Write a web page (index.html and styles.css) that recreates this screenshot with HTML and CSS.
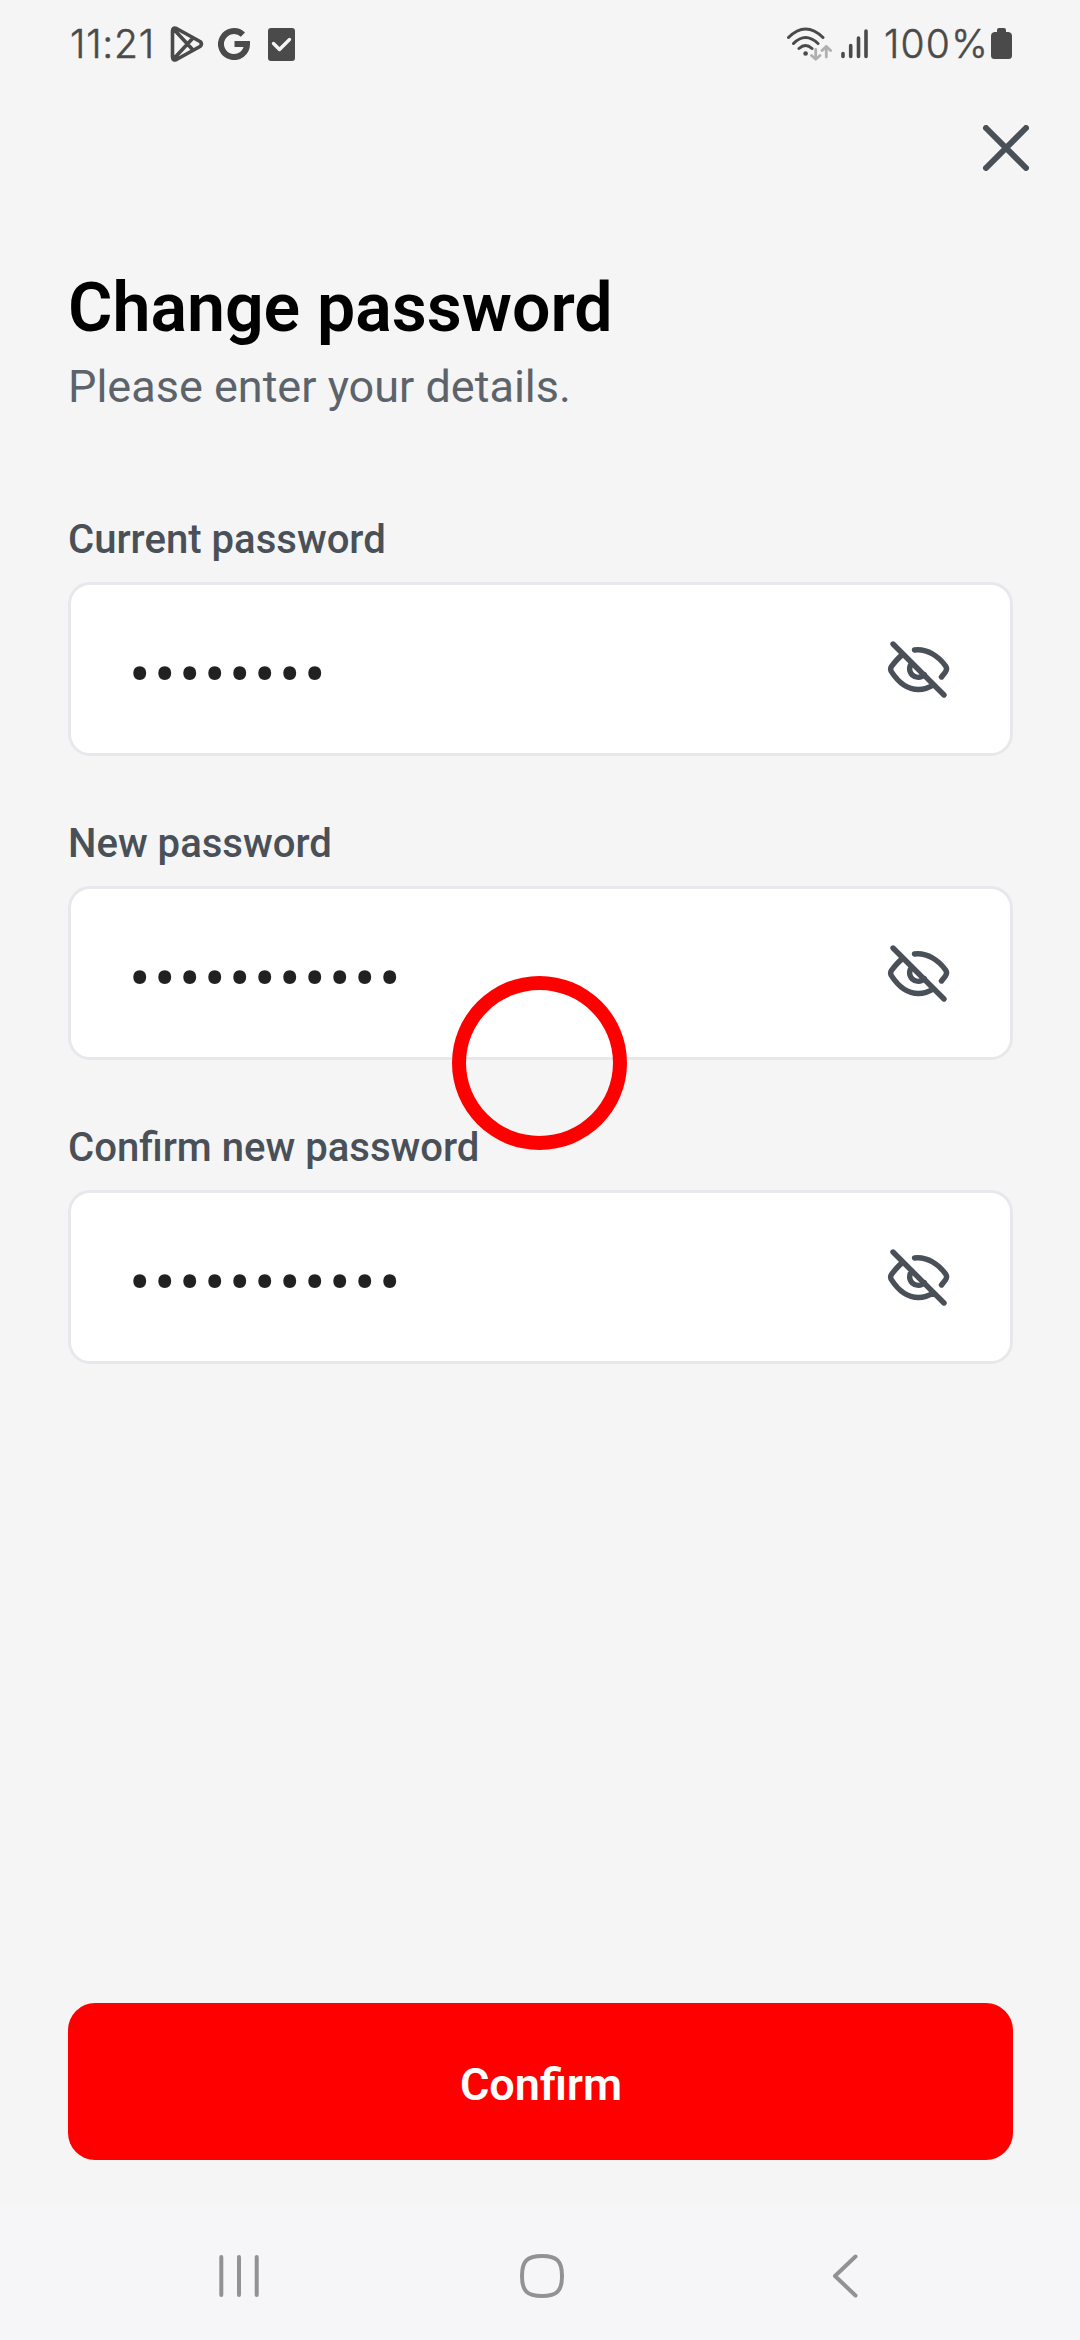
FILE: index.html
```html
<!DOCTYPE html>
<html lang="en">
<head>
<meta charset="utf-8">
<title>Change password</title>
<link rel="stylesheet" href="styles.css">
</head>
<body>
<svg class="defs" aria-hidden="true">
  <symbol id="eye-off" viewBox="0 0 68 68">
    <path d="M30.5 15C44 13.5 55 22 61.5 30.8Q63.600 34 61.500 36.800L57.500 42M18 20C13.500 23.500 10.500 27.500 7.400 31.600Q5.800 34 7.400 36.600C15 48.500 24 54.500 34.500 54.500C40 54.500 44.500 53 49 50M28 27.800A8.500 8.500 0 1 0 40.500 39.700M9 9L60 60"/>
  </symbol>
</svg>
<div class="screen">
  <header class="status">
    <div class="status-left">
      <span class="clock">11:21</span>
      <svg class="i-play" viewBox="0 0 34 36"><path d="M2.500 5V31Q2.800 35 6.500 33.500L30 20.500Q33 18 30 15.500L6.500 2.500Q2.800 1 2.500 5ZM4 3.500L23 24M4 32.500L23 12"/></svg>
      <svg class="i-g" viewBox="0 0 32 32"><path d="M24.900 6.600A13 13 0 1 0 29 16H16.500"/></svg>
      <svg class="i-check" viewBox="0 0 27 33"><rect width="27" height="33" rx="3"/><path d="M5.500 15.500L11.500 21.500L21.500 11.500"/></svg>
    </div>
    <div class="status-right">
      <svg class="i-wifi" viewBox="0 0 46 34"><g class="arcs"><path d="M1.500 10.500Q18.500-6.500 36 10.500M6.500 16.500Q18.500 4.500 31 16.500M12 21.500Q18.500 15.500 25 21.500"/></g><circle cx="18.600" cy="26.500" r="2.300"/><g class="arrows"><path d="M28.700 22.500V32M24.500 28.500L28.700 32.300L33 28.500M39.300 30V19.500M35 23.500L39.300 19.500L43.600 23.500"/></g></svg>
      <svg class="i-signal" viewBox="0 0 28 30"><path d="M2 24.500V27.500M9.700 16.500V27.500M17.500 9V27.500M25 2V27.500"/></svg>
      <span class="battery-text">100%</span>
      <svg class="i-battery" viewBox="0 0 21 32"><path d="M6 4V2Q6 0 8 0H13Q15 0 15 2V4H17.500Q21 4.500 21 8V27.500Q21 31 17.500 31H3.500Q0 31 0 27.500V8Q0 4.500 3.500 4Z"/></svg>
    </div>
  </header>
  <div class="toolbar">
    <svg class="close" viewBox="0 0 46 46"><path d="M3 3L43 43M43 3L3 43"/></svg>
  </div>
  <main class="content">
    <h1>Change password</h1>
    <p class="sub">Please enter your details.</p>
    <div class="field">
      <label>Current password</label>
      <div class="box"><span class="dots">••••••••</span><svg class="eye"><use href="#eye-off"/></svg></div>
    </div>
    <div class="field">
      <label>New password</label>
      <div class="box"><span class="dots">•••••••••••</span><svg class="eye"><use href="#eye-off"/></svg></div>
    </div>
    <div class="field">
      <label>Confirm new password</label>
      <div class="box"><span class="dots">•••••••••••</span><svg class="eye"><use href="#eye-off"/></svg></div>
    </div>
    <button class="confirm">Confirm</button>
  </main>
  <nav class="nav">
    <svg viewBox="0 0 48 48"><path d="M6.300 5V43M24 5V43M41.700 5V43"/></svg>
    <svg viewBox="0 0 48 48"><path d="M24 4C39 4 44 9 44 24S39 44 24 44S4 39 4 24S9 4 24 4Z"/></svg>
    <svg viewBox="0 0 48 48"><path d="M35.500 4.500L15 24L35.500 43.500"/></svg>
  </nav>
  <div class="touch"></div>
</div>
</body>
</html>
```
FILE: styles.css
```css
* { box-sizing: border-box; }
body { margin: 0; font-family: Roboto, sans-serif; background: #f5f5f5; }
svg { display: block; flex: none; fill: none; stroke-linecap: round; stroke-linejoin: round; }
.defs { position: absolute; width: 0; height: 0; }
.screen { position: relative; width: 1080px; height: 2340px; display: flex; flex-direction: column; overflow: hidden; }

.status { height: 88px; padding: 0 68px 0 70px; display: flex; justify-content: space-between; align-items: center; color: #4a4a4a; font-family: Inter, sans-serif; font-size: 39px; font-weight: 300; line-height: 88px; -webkit-text-stroke: 0.5px #4a4a4a; }
.status-left, .status-right { display: flex; align-items: center; height: 88px; }
.clock { width: 100px; letter-spacing: 0.8px; }
.i-play { width: 34px; height: 36px; stroke: #4a4a4a; stroke-width: 3.600; }
.i-g { width: 32px; height: 32px; margin-left: 14px; stroke: #4a4a4a; stroke-width: 6; stroke-linecap: butt; stroke-linejoin: miter; }
.i-check { width: 27px; height: 33px; margin-left: 18px; }
.i-check rect { fill: #4a4a4a; }
.i-check path { stroke: #f5f5f5; stroke-width: 3.400; }
.i-wifi { width: 46px; height: 34px; }
.i-wifi .arcs { stroke: #4a4a4a; stroke-width: 3; }
.i-wifi circle { fill: #4a4a4a; }
.i-wifi .arrows { stroke: #b0b0b0; stroke-width: 2.800; }
.i-signal { width: 28px; height: 30px; margin-left: 8px; stroke: #4a4a4a; stroke-width: 3.600; }
.battery-text { width: 107px; margin-left: 15px; letter-spacing: 1.2px; white-space: nowrap; }
.i-battery { width: 21px; height: 32px; fill: #4a4a4a; }

.toolbar { height: 120px; padding: 37px 51px 0 0; display: flex; justify-content: flex-end; }
.close { width: 46px; height: 46px; stroke: #495057; stroke-width: 6; }

.content { flex: 1; padding: 60px 67px 45px 68px; display: flex; flex-direction: column; }
h1 { margin: 0; font-size: 68px; line-height: 80px; font-weight: 600; color: #000; white-space: nowrap; }
.sub { margin: 12px 0 100px; font-size: 45px; line-height: 54px; color: #5c636b; }
.field { display: flex; flex-direction: column; gap: 17px; margin-bottom: 62px; }
label { height: 51px; font-size: 40.100px; line-height: 51px; font-weight: 500; color: #495057; }
.box { height: 174px; border: 3px solid #e7e8ec; border-radius: 22px; background: #fff; padding: 0 58px; display: flex; align-items: center; justify-content: space-between; }
.dots { padding-top: 14px; font-size: 64px; line-height: 54px; color: #212121; letter-spacing: 3.400px; }
.eye { width: 68px; height: 68px; stroke: #495057; stroke-width: 5.400; }
.confirm { margin-top: auto; height: 157px; padding: 7px 0 0 1px; border: 0; border-radius: 27px; background: #f00; color: #fff; font: 600 45px/54px Roboto, sans-serif; }
.nav { height: 135px; padding: 7px 212px 0 215px; background: #f6f6f9; display: flex; justify-content: space-between; align-items: center; }
.nav svg { width: 48px; height: 48px; stroke: #929292; stroke-width: 4; }
.touch { position: absolute; left: 452px; top: 976px; width: 175px; height: 174px; border: 14px solid #f00; border-radius: 50%; }
```
